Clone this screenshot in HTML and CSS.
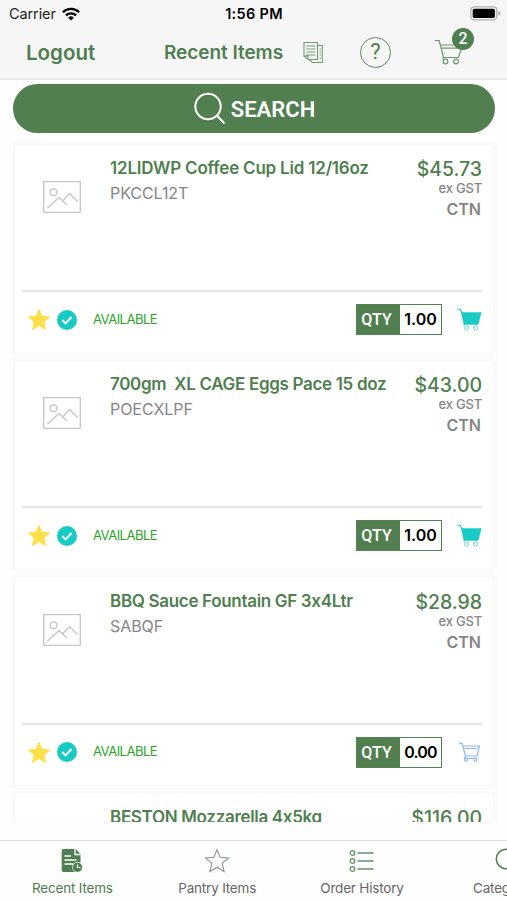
FILE: index.html
```html
<!DOCTYPE html>
<html lang="en">
<head>
<meta charset="utf-8">
<title>Recent Items</title>
<link rel="stylesheet" href="styles.css">
</head>
<body>
<svg class="defs" aria-hidden="true">
  <symbol id="photo" viewBox="0 0 38 32"><g fill="none" stroke="#c6c6c6" stroke-width="1.3"><path d="M.7.7h36.6v30.6H.7z"/><circle cx="10.5" cy="11.3" r="3.4"/><path d="M4.5 27 16 16.5l8 7.5M19.500 20 26.500 12.500 34.500 20.500"/></g></symbol>
  <symbol id="star" viewBox="0 0 22 21"><path d="M11 .5 14 7.300l7.500.7-5.600 5 1.600 7.500L11 16.600l-6.500 3.900L6.100 13 .5 8 8 7.300z" fill="#ffe04a" stroke="#ffe04a" stroke-linejoin="round"/></symbol>
  <symbol id="check" viewBox="0 0 20 20"><circle cx="10" cy="10" r="10" fill="#18cbc4"/><path d="m5.300 10 3.300 3.400 6-6.400" fill="none" stroke="#fff" stroke-width="1.900"/></symbol>
  <symbol id="cart-full" viewBox="0 0 25 23"><path d="M.5 1.200H3l1.700 3 2.800 13.200" fill="none" stroke="#18cbc4" stroke-width="1.100"/><path d="M4.300 4.200H24.500L21.300 16.800H7z" fill="#18cbc4"/><g fill="#fff" stroke="#5fdad5"><circle cx="9.500" cy="20" r="2"/><circle cx="18.300" cy="20" r="2"/></g></symbol>
  <symbol id="cart-line" viewBox="0 0 25 23"><g fill="none" stroke="#86b8f5" stroke-width="1.200"><path d="M2 2.300h3L8.500 15H20l2.500-10H5.800M8.500 15l-1 2.500h13M7.700 7.500h12.500"/><circle cx="9" cy="18.700" r="1.500"/><circle cx="18.300" cy="18.700" r="1.500"/></g></symbol>
</svg>
<div class="app">
  <header class="header">
    <div class="status">
      <div class="carrier"><span>Carrier</span>
        <svg width="18" height="14" viewBox="0 0 18 14"><g fill="none" stroke="#000" stroke-width="2.300"><path d="M.9 5.300a11.500 11.500 0 0 1 16.200 0M3.900 8.400a7.200 7.200 0 0 1 10.200 0"/></g><path d="M9 13.600 6.200 10.700a4 4 0 0 1 5.600 0z"/></svg>
      </div>
      <div class="clock">1:56 PM</div>
      <svg class="battery" width="31" height="15" viewBox="0 0 31 15"><rect x=".8" y=".8" width="26" height="13" rx="3.500" fill="#f6f6f6" stroke="#b2b2b2" stroke-width="1.300"/><rect x="2.700" y="2.700" width="22.200" height="9.200" rx="1.700"/><path d="M28.400 5q2 1 2 2.400t-2 2.400z" fill="#aaa"/></svg>
    </div>
    <nav class="nav">
      <span class="logout">Logout</span>
      <h1 class="title">Recent Items</h1>
      <svg class="copy" width="21" height="23" viewBox="0 0 21 23" fill="none" stroke="#709b72" stroke-width="1.100"><path d="M1 1.500h13.500v17H5L1 15zM1 15h4v3.500M14.500 4.500h4.800v17H9.500L6 18.500M3.300 5h9M3.300 8h9M3.300 11h9M3.300 14h9M16.500 8h1.500M16.500 11h1.500M16.500 14h1.500M16.500 17h1.500"/></svg>
      <span class="help">?</span>
      <div class="basket">
        <svg width="30" height="26" viewBox="0 0 30 26" fill="none" stroke="#6d986f" stroke-width="1.200"><path d="M.8 1.500h4.400L9.500 18.500h15L28.500 6H6.400M7.300 9.200h16"/><path d="M9.500 18.500 8.600 20" /><circle cx="11.500" cy="22.500" r="2.300"/><circle cx="22" cy="22.500" r="2.300"/></svg>
        <span class="badge">2</span>
      </div>
    </nav>
  </header>
  <div class="search">
    <svg width="34" height="34" viewBox="0 0 34 34" fill="none" stroke="#fff" stroke-width="2"><circle cx="15" cy="14.500" r="12.700"/><path d="m24 23.500 7.500 8"/></svg>
    <span>SEARCH</span>
  </div>
  <main class="list">
    <article class="card">
      <div class="info">
        <svg class="photo"><use href="#photo"/></svg>
        <div class="name"><h2 class="loose">12LIDWP Coffee Cup Lid 12/16oz</h2><p>PKCCL12T</p></div>
        <div class="cost"><b>$45.73</b><small>ex GST</small><span>CTN</span></div>
      </div>
      <div class="actions">
        <svg class="star"><use href="#star"/></svg><svg class="check"><use href="#check"/></svg><span class="avail">AVAILABLE</span>
        <div class="qty"><span>QTY</span><b>1.00</b></div><svg class="cart"><use href="#cart-full"/></svg>
      </div>
    </article>
    <article class="card">
      <div class="info">
        <svg class="photo"><use href="#photo"/></svg>
        <div class="name"><h2>700gm  XL CAGE Eggs Pace 15 doz</h2><p>POECXLPF</p></div>
        <div class="cost"><b>$43.00</b><small>ex GST</small><span>CTN</span></div>
      </div>
      <div class="actions">
        <svg class="star"><use href="#star"/></svg><svg class="check"><use href="#check"/></svg><span class="avail">AVAILABLE</span>
        <div class="qty"><span>QTY</span><b>1.00</b></div><svg class="cart"><use href="#cart-full"/></svg>
      </div>
    </article>
    <article class="card">
      <div class="info">
        <svg class="photo"><use href="#photo"/></svg>
        <div class="name"><h2>BBQ Sauce Fountain GF 3x4Ltr</h2><p>SABQF</p></div>
        <div class="cost"><b>$28.98</b><small>ex GST</small><span>CTN</span></div>
      </div>
      <div class="actions">
        <svg class="star"><use href="#star"/></svg><svg class="check"><use href="#check"/></svg><span class="avail">AVAILABLE</span>
        <div class="qty"><span>QTY</span><b class="zero">0.00</b></div><svg class="cart"><use href="#cart-line"/></svg>
      </div>
    </article>
    <article class="card">
      <div class="info">
        <div class="photo"></div>
        <div class="name"><h2>BESTON Mozzarella 4x5kg</h2></div>
        <div class="cost"><b>$116.00</b></div>
      </div>
    </article>
  </main>
  <footer class="tabs">
    <div class="tab active">
      <svg width="24" height="26" viewBox="0 0 24 26"><path d="M3.500 1h12l5 5v8.500a5.500 5.500 0 0 0-5 9.500h-12q-1.800 0-1.800-1.800V2.800Q1.700 1 3.500 1z" fill="#4f7f50"/><path d="M15 1v5.500h5.500M4.500 8h6.500M4.500 12h12M4.500 16h9" fill="none" stroke="#fff" stroke-width="1.300"/><circle cx="17.500" cy="19.300" r="5" fill="#4f7f50" stroke="#fff" stroke-width=".7"/><path d="M17.500 16.500v3h3" fill="none" stroke="#fff" stroke-width="1.200"/></svg>
      <span>Recent Items</span>
    </div>
    <div class="tab">
      <svg width="26" height="26" viewBox="0 0 26 26"><path d="m13 1.700 3.200 7.600 8.300.7-6.300 5.400 1.900 8.100L13 19.200l-7.100 4.300 1.900-8.100L1.500 10l8.300-.7z" fill="none" stroke="#879c88" stroke-width="1.100"/></svg>
      <span>Pantry Items</span>
    </div>
    <div class="tab">
      <svg width="26" height="26" viewBox="0 0 26 26" fill="none" stroke="#64926a" stroke-width="1.300"><circle cx="3.500" cy="5" r="2.300"/><circle cx="3.500" cy="13" r="2.300"/><circle cx="3.500" cy="21" r="2.300"/><path d="M8.500 5h16M8.500 13h16M8.500 21h16"/></svg>
      <span>Order History</span>
    </div>
    <div class="tab">
      <svg width="26" height="26" viewBox="0 0 26 26" fill="none" stroke="#4f7f50" stroke-width="1.500"><circle cx="12" cy="11" r="9.700"/><path d="m19 18 6 6"/></svg>
      <span>Categories</span>
    </div>
  </footer>
</div>
</body>
</html>
```
FILE: styles.css
```css
* { box-sizing: border-box; }
body { margin: 0; background: #fefefe; font-family: Inter, "Liberation Sans", sans-serif; font-feature-settings: "calt" 0; }
h1, h2, p { margin: 0; }
svg { display: block; flex: none; }
.defs { width: 0; height: 0; position: absolute; }
.app { width: 507px; height: 900px; overflow: hidden; display: flex; flex-direction: column; }

.header { height: 80px; background: #f6f6f6; border-bottom: 2px solid #e9e9e9; flex: none; }
.status { height: 27px; display: grid; grid-template-columns: 1fr auto 1fr; align-items: center; padding: 0 6px 0 9px; font-size: 14.5px; letter-spacing: -.1px; }
.carrier { display: flex; gap: 6px; align-items: center; color: #222; }
.clock { font-weight: 600; letter-spacing: .3px; margin-left: -2px; }
.battery { justify-self: end; }
.nav { height: 50px; display: flex; align-items: center; color: #4f7f50; }
.logout { margin-left: 26px; width: 138px; font-size: 20.5px; font-weight: 600; }
.title { width: 139px; font-size: 19px; font-weight: 600; letter-spacing: -.05px; white-space: nowrap; }
.help { width: 31px; height: 31px; margin-left: 36px; border: 1.3px solid #5c895e; border-radius: 50%; font: 22px/28px Roboto, sans-serif; text-align: center; }
.basket { position: relative; margin-left: 43px; }
.badge { position: absolute; left: 18px; top: -11px; width: 22px; height: 22px; border-radius: 50%; background: #4f7f50; color: #fff; font: 500 16px/22px Roboto, sans-serif; text-align: center; }

.search { flex: none; margin: 4px 12px 0 13px; height: 49px; border-radius: 25px; background: #527f50; color: #fff; display: flex; align-items: center; justify-content: center; gap: 4px; font: 600 22px/49px Roboto, sans-serif; }
.search span { padding-top: 2px; }

.list { height: 689px; padding: 12px 14px 0 15px; overflow: hidden; display: flex; flex-direction: column; gap: 9.300px; }
.card { flex: none; height: 207px; background: #fff; box-shadow: 0 0 3px 3px #f9f9f9; padding: 0 11px 0 7px; }
.info { height: 147px; border-bottom: 2px solid #e6e6e6; display: flex; padding-top: 12px; }
.photo { width: 38px; height: 32px; margin: 24px 29px 0 21px; flex: none; }
.name { flex: 1; white-space: pre; }
.name h2 { color: #4f7f50; font-size: 17px; line-height: 22px; font-weight: 600; letter-spacing: -.32px; }
.name h2.loose { letter-spacing: -.2px; }
.name p { color: #858585; font-size: 16px; line-height: 22px; margin-top: 3px; letter-spacing: -.05px; }
.cost { display: flex; flex-direction: column; align-items: flex-end; color: #858585; }
.cost b { color: #4f7f50; font-weight: 500; font-size: 19.500px; line-height: 24px; letter-spacing: -.05px; }
.cost small { font-size: 13px; line-height: 16px; font-weight: 500; margin-top: -1px; letter-spacing: -.2px; }
.cost span { font-size: 16px; line-height: 26px; font-weight: 600; margin-right: 1px; }
.actions { height: 55px; display: flex; align-items: center; }
.star { width: 22px; height: 21px; margin-left: 6px; }
.check { width: 20px; height: 20px; margin-left: 7px; }
.avail { margin: 0 0 2px 16px; color: #2aa52a; font-size: 13px; letter-spacing: -.5px; }
.qty { margin-left: auto; width: 86px; height: 31px; display: flex; border: 1.5px solid #568356; line-height: 29px; text-align: center; }
.qty span { width: 43px; background: #527f50; color: #fff; font: 500 16px/29px Roboto, sans-serif; padding-right: 4px; }
.qty b { flex: 1; font-size: 16px; font-weight: 600; }
.qty .zero { letter-spacing: -.8px; }
.cart { width: 25px; height: 23px; margin-left: 15px; }

.tabs { flex: none; margin-top: 18px; height: 60px; border-top: 1px solid #dedede; display: flex; }
.tab { flex: 0 0 144.800px; display: flex; flex-direction: column; align-items: center; padding-top: 7px; color: #666; font-size: 13.500px; line-height: 18px; gap: 5px; letter-spacing: -.2px; }
.tab.active { color: #4f7f50; }
```
